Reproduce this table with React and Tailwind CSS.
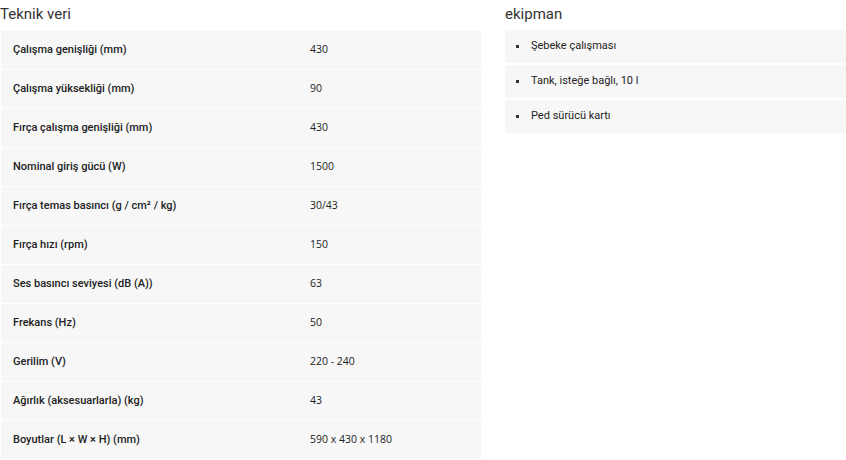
const specs = [
  ["Çalışma genişliği (mm)", "430"],
  ["Çalışma yüksekliği (mm)", "90"],
  ["Fırça çalışma genişliği (mm)", "430"],
  ["Nominal giriş gücü (W)", "1500"],
  ["Fırça temas basıncı (g / cm² / kg)", "30/43"],
  ["Fırça hızı (rpm)", "150"],
  ["Ses basıncı seviyesi (dB (A))", "63"],
  ["Frekans (Hz)", "50"],
  ["Gerilim (V)", "220 - 240"],
  ["Ağırlık (aksesuarlarla) (kg)", "43"],
  ["Boyutlar (L × W × H) (mm)", "590 x 430 x 1180"],
];

const equipment = ["Şebeke çalışması", "Tank, isteğe bağlı, 10 l", "Ped sürücü kartı"];

export default function App() {
  return (
    <div className="flex w-[846px] h-[460px] bg-white overflow-hidden text-[#222] font-['Roboto',sans-serif]">
      <div className="w-[481px] pt-[4px]">
        <h2 className="text-[15px] leading-[20px] h-[27px] text-[#333]">Teknik veri</h2>
        <div className="flex flex-col gap-[1px] pl-[1px]">
          {specs.map(([label, value]) => (
            <div key={label} className="flex items-center h-[38px] bg-[#f7f7f7] text-[11px]">
              <div className="w-[309px] pl-[12px] font-medium">{label}</div>
              <div className="font-['Open_Sans',sans-serif] text-[10.5px]">{value}</div>
            </div>
          ))}
        </div>
      </div>
      <div className="ml-[24px] flex-1 pt-[4px]">
        <h2 className="text-[15px] leading-[20px] h-[26px] text-[#333]">ekipman</h2>
        <ul className="flex flex-col gap-[2px]">
          {equipment.map((item) => (
            <li key={item} className="flex items-center h-[33px] bg-[#f7f7f7] text-[11px]">
              <span className="w-[3px] h-[3px] bg-[#333] ml-[11px] mr-[12px]" />
              {item}
            </li>
          ))}
        </ul>
      </div>
    </div>
  );
}
